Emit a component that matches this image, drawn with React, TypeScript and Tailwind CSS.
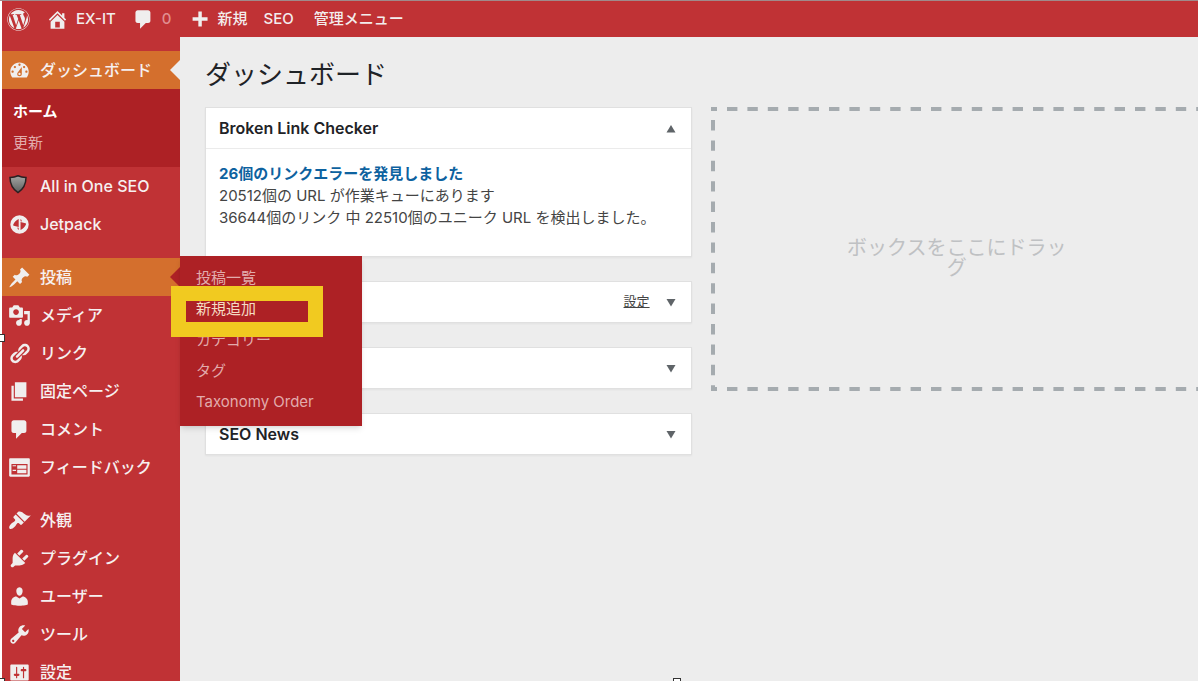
import type { ReactNode } from "react";
import { FaWordpress } from "react-icons/fa";

const ICONS = {
  home: "M16 8.5l1.53 1.53-1.06 1.06L10 4.6l-6.47 6.49-1.06-1.06L10 2.5l4 4v-2h2v4zm-6-2.46l6 5.99V18H4v-5.97zM12 17v-5H8v5h4z",
  plus: "M17 8v3h-5v5H9v-5H4V8h5V3h3v5h5z",
  dashboard:
    "M3.76 16h12.48c1.1-1.37 1.76-3.11 1.76-5 0-4.42-3.58-8-8-8s-8 3.58-8 8c0 1.89.66 3.63 1.76 5zM10 4c.55 0 1 .45 1 1s-.45 1-1 1-1-.45-1-1 .45-1 1-1zM6 6c.55 0 1 .45 1 1s-.45 1-1 1-1-.45-1-1 .45-1 1-1zm8 0c.55 0 1 .45 1 1s-.45 1-1 1-1-.45-1-1 .45-1 1-1zm-5.37 5.55L12 7v6c0 1.1-.9 2-2 2s-2-.9-2-2c0-.57.24-1.08.63-1.45zM4 10c.55 0 1 .45 1 1s-.45 1-1 1-1-.45-1-1 .45-1 1-1zm12 0c.55 0 1 .45 1 1s-.45 1-1 1-1-.45-1-1 .45-1 1-1zm-5 3c0-.55-.45-1-1-1s-1 .45-1 1 .45 1 1 1 1-.45 1-1z",
  jetpack:
    "M10 2a8 8 0 1 0 0 16 8 8 0 0 0 0-16zM9.300 5.200v6.900l-4.300-1.100c-.6-.2-.6-.6-.4-1.100C5.500 7.800 7.200 6 9.300 5.200zM8.200 12.600l1.100.3v1.900c-.7-.5-1.100-1.300-1.100-2.200zM10.900 14.800V7.900l4.300 1.100c.6.2.6.6.4 1.100-.9 2.100-2.600 3.900-4.700 4.700zM10.900 5.200c.7.500 1.100 1.300 1.100 2.200l-1.100-.3z",
  post: "M10.44 3.02l1.82-1.82 6.36 6.35-1.83 1.82c-1.05-.68-2.48-.57-3.41.36l-.75.75c-.92.93-1.04 2.35-.35 3.41l-1.83 1.82-2.41-2.41-2.8 2.79c-.42.42-3.38 2.71-3.8 2.29s1.86-3.39 2.28-3.81l2.79-2.79L4.1 9.36l1.83-1.82c1.05.69 2.48.57 3.4-.36l.75-.75c.93-.92 1.05-2.35.36-3.41z",
  media:
    "M13 11V4c0-.55-.45-1-1-1h-1.67L9 1H5L3.67 3H2c-.55 0-1 .45-1 1v7c0 .55.45 1 1 1h10c.55 0 1-.45 1-1zM7 4.5c1.38 0 2.5 1.12 2.5 2.5S8.38 9.5 7 9.5 4.5 8.38 4.5 7 5.62 4.5 7 4.5zM14 6h5v10.5c0 1.38-1.12 2.5-2.5 2.5S14 17.88 14 16.5s1.12-2.5 2.5-2.5c.17 0 .34.02.5.05V9h-3V6zm-4 8.05V13h2v3.5c0 1.38-1.12 2.5-2.5 2.5S7 17.88 7 16.5 8.12 14 9.5 14c.17 0 .34.02.5.05z",
  links:
    "M17.74 2.76c1.68 1.69 1.68 4.41 0 6.1l-1.53 1.52c-1.12 1.12-2.7 1.47-4.14 1.09l2.62-2.61.76-.77.76-.76c.84-.84.84-2.2 0-3.04-.84-.85-2.2-.85-3.04 0l-.77.76-3.38 3.38c-.37-1.44-.02-3.02 1.1-4.14l1.52-1.53c1.69-1.68 4.42-1.68 6.1 0zM8.59 13.43l5.34-5.34c.42-.42.42-1.1 0-1.52-.44-.43-1.13-.39-1.53 0l-5.33 5.34c-.42.42-.42 1.1 0 1.52.44.43 1.13.39 1.52 0zm-.76 2.29l4.14-4.15c.38 1.44.03 3.02-1.09 4.14l-1.52 1.53c-1.69 1.68-4.41 1.68-6.1 0-1.68-1.68-1.68-4.42 0-6.1l1.53-1.52c1.12-1.12 2.7-1.47 4.14-1.1l-4.14 4.15c-.85.84-.85 2.2 0 3.05.84.84 2.2.84 3.04 0z",
  page: "M6 15V2h10v13H6zm-1 1h8v2H3V5h2v11z",
  comments:
    "M5 2h9c1.1 0 2 .9 2 2v7c0 1.1-.9 2-2 2h-2l-5 5v-5H5c-1.1 0-2-.9-2-2V4c0-1.1.9-2 2-2z",
  feedback:
    "M2 2h16c.55 0 1 .45 1 1v14c0 .55-.45 1-1 1H2c-.55 0-1-.45-1-1V3c0-.55.45-1 1-1zm15 14V7H3v9h14zM4 8v1h3V8H4zm4 0v3h8V8H8zm-4 4v1h3v-1H4zm4 0v3h8v-3H8z",
  appearance:
    "M14.48 11.06L7.41 3.99l1.5-1.5c.5-.56 2.3-.47 3.51.32 1.21.8 1.43 1.28 2.91 2.1 1.18.64 2.45 1.26 4.45.85zm-.71.71L6.7 4.7 4.93 6.47c-.39.39-.39 1.02 0 1.41l1.06 1.06c.39.39.39 1.03 0 1.42-.6.6-1.43 1.11-2.21 1.69-.35.26-.7.53-1.01.84C1.43 14.23.4 16.08 1.4 17.07c.99 1 2.84-.03 4.18-1.36.31-.31.58-.66.85-1.02.57-.78 1.08-1.61 1.69-2.21.39-.39 1.02-.39 1.41 0l1.06 1.06c.39.39 1.02.39 1.41 0z",
  plugins:
    "M13.11 4.36L9.87 7.6 8 5.73l3.24-3.24c.35-.34 1.05-.2 1.56.32.52.51.66 1.21.31 1.55zm-8 1.77l.91-1.12 9.01 9.01-1.19.84c-.71.71-2.63 1.16-3.82 1.16H6.14L4.9 17.26c-.59.59-1.54.59-2.12 0-.59-.58-.59-1.53 0-2.12l1.24-1.24v-3.88c0-1.13.4-3.19 1.09-3.89zm7.26 3.97l3.24-3.24c.34-.35 1.04-.21 1.55.31.52.51.66 1.21.31 1.55l-3.24 3.25z",
  users:
    "M10 9.25c-2.27 0-2.73-3.44-2.73-3.44C7 4.02 7.82 2 9.97 2c2.16 0 2.98 2.02 2.71 3.81 0 0-.41 3.44-2.68 3.44zm0 2.57L12.72 10c2.39 0 4.52 2.33 4.52 4.53v2.49s-3.65 1.13-7.24 1.13c-3.65 0-7.24-1.13-7.24-1.13v-2.49c0-2.25 1.94-4.48 4.47-4.48z",
  tools:
    "M16.68 9.77c-1.34 1.34-3.3 1.67-4.95.99l-5.41 6.52c-.99.99-2.59.99-3.58 0s-.99-2.59 0-3.57l6.52-5.42c-.68-1.65-.35-3.61.99-4.95 1.28-1.28 3.12-1.62 4.72-1.06l-2.89 2.89 2.82 2.82 2.86-2.87c.53 1.58.18 3.39-1.08 4.65zM3.81 16.21c.4.39 1.04.39 1.43 0 .4-.4.4-1.04 0-1.43-.39-.4-1.03-.4-1.43 0-.39.39-.39 1.03 0 1.43z",
  settings:
    "M18 16V4c0-.55-.45-1-1-1H3c-.55 0-1 .45-1 1v12c0 .55.45 1 1 1h14c.55 0 1-.45 1-1zM8 11h1c.55 0 1 .45 1 1s-.45 1-1 1H8v1.5c0 .28-.22.5-.5.5s-.5-.22-.5-.5V13H6c-.55 0-1-.45-1-1s.45-1 1-1h1V5.5c0-.28.22-.5.5-.5s.5.22.5.5V11zm5-2h-1c-.55 0-1-.45-1-1s.45-1 1-1h1V5.5c0-.28.22-.5.5-.5s.5.22.5.5V7h1c.55 0 1 .45 1 1s-.45 1-1 1h-1v5.5c0 .28-.22.5-.5.5s-.5-.22-.5-.5V9z",
};

type IconName = keyof typeof ICONS;

function Icon({ name }: { name: IconName }) {
  return (
    <svg viewBox="0 0 20 20" className="size-[23px] shrink-0 fill-[#f0eeee]" aria-hidden="true">
      <path fillRule="evenodd" d={ICONS[name]} />
    </svg>
  );
}

function ShieldIcon() {
  return (
    <svg viewBox="0 0 20 20" className="mb-1 size-5 shrink-0" aria-hidden="true">
      <defs>
        <linearGradient id="shield" x1="0" y1="0" x2="0" y2="1">
          <stop offset="0" stopColor="#a5a5a3" />
          <stop offset="1" stopColor="#5c5f5e" />
        </linearGradient>
      </defs>
      <path
        d="M10 1.800C7.500 3 5 3.500 2 3.600c0 6.400 2.300 11.400 8 15 5.700-3.600 8-8.600 8-15-3-.1-5.500-.6-8-1.800z"
        fill="url(#shield)"
        stroke="#2a2022"
        strokeWidth="1.500"
      />
    </svg>
  );
}

function AdminBar() {
  return (
    <header className="flex h-9 items-center bg-[#c03235] pl-[5px] text-[15px] font-medium text-[#f3eded]">
      <a href="#" aria-label="WordPress">
        <FaWordpress className="size-[23px] fill-[#f0eeee]" />
      </a>
      <a href="#" className="ml-4 flex items-center gap-[7px]">
        <Icon name="home" />
        EX-IT
      </a>
      <a href="#" className="ml-4 flex items-center gap-[7px]">
        <Icon name="comments" />
        <span className="text-[#e08e90]">0</span>
      </a>
      <a href="#" className="ml-4 flex items-center gap-[7px]">
        <Icon name="plus" />
        新規
      </a>
      <a href="#" className="ml-4">SEO</a>
      <a href="#" className="ml-5">管理メニュー</a>
    </header>
  );
}

function MenuItem({
  icon,
  label,
  active,
  children,
}: {
  icon: IconName | "shield";
  label: string;
  active?: boolean;
  children?: ReactNode;
}) {
  return (
    <li className="relative">
      <a
        href="#"
        className={`flex h-[38px] items-center text-base font-medium text-[#f6f0f0] ${
          active ? "bg-[#d46f2d]" : ""
        }`}
      >
        <span className="flex w-[38px] shrink-0 pl-[6px]">
          {icon === "shield" ? <ShieldIcon /> : <Icon name={icon} />}
        </span>
        {label}
      </a>
      {children}
    </li>
  );
}

function PostsFlyout() {
  return (
    <>
      <span className="absolute top-[9px] right-0 border-y-[10px] border-r-[10px] border-y-transparent border-r-[#ad2125]" />
      <ul className="absolute top-[-2px] left-full z-10 w-[182px] bg-[#ad2125] pt-[6px] pb-[9px] pl-4 text-[15px] leading-[31px] text-[#e2abac] shadow-md">
        <li><a href="#">投稿一覧</a></li>
        <li className="relative">
          <a href="#" className="text-[#f5dcc4]">新規追加</a>
          <span className="absolute top-[-7px] left-[-25px] h-[51px] w-[152px] border-[15px] border-[#f1ca20]" />
        </li>
        <li><a href="#">カテゴリー</a></li>
        <li><a href="#">タグ</a></li>
        <li><a href="#">Taxonomy Order</a></li>
      </ul>
    </>
  );
}

function Sidebar() {
  return (
    <nav className="w-[178px] shrink-0 bg-[#c03235] pt-[14px]">
      <ul>
        <MenuItem icon="dashboard" label="ダッシュボード" active>
          <span className="absolute top-[9px] right-0 border-y-[10px] border-r-[10px] border-y-transparent border-r-[#ededed]" />
        </MenuItem>
        <li className="bg-[#ad2125] px-[11px] pt-[7px] pb-[9px] text-[15px] leading-[31px]">
          <a href="#" className="block font-bold text-white">ホーム</a>
          <a href="#" className="block text-[#e2abac]">更新</a>
        </li>
        <MenuItem icon="shield" label="All in One SEO" />
        <MenuItem icon="jetpack" label="Jetpack" />
      </ul>
      <ul className="mt-[15px]">
        <MenuItem icon="post" label="投稿" active>
          <PostsFlyout />
        </MenuItem>
        <MenuItem icon="media" label="メディア" />
        <MenuItem icon="links" label="リンク" />
        <MenuItem icon="page" label="固定ページ" />
        <MenuItem icon="comments" label="コメント" />
        <MenuItem icon="feedback" label="フィードバック" />
      </ul>
      <ul className="mt-[15px]">
        <MenuItem icon="appearance" label="外観" />
        <MenuItem icon="plugins" label="プラグイン" />
        <MenuItem icon="users" label="ユーザー" />
        <MenuItem icon="tools" label="ツール" />
        <MenuItem icon="settings" label="設定" />
      </ul>
    </nav>
  );
}

function Widget({
  title,
  action,
  children,
}: {
  title: string;
  action?: ReactNode;
  children?: ReactNode;
}) {
  return (
    <section className="border border-[#e0e0e0] bg-white shadow-xs">
      <div className="flex h-10 items-center pr-[14px] pl-[13px]">
        <h2 className="flex-1 text-base font-semibold text-[#1f2327]">{title}</h2>
        {action}
        <button type="button" aria-label={`${title} toggle`} aria-expanded={!!children}>
          <svg viewBox="0 0 12 12" className="size-3 fill-[#5f6468]">
            <path d={children ? "M6 3l4.500 7.500h-9z" : "M6 10.500L1.500 3h9z"} />
          </svg>
        </button>
      </div>
      {children}
    </section>
  );
}

function DropZone() {
  return (
    <div className="relative flex h-[284px] justify-center pt-[131px] pr-1">
      <svg className="absolute inset-0 size-full fill-none stroke-[#a5abaf] stroke-[4]" aria-hidden="true">
        <line x1="0" y1="2" x2="100%" y2="2" strokeDasharray="10.400 10" strokeDashoffset="4.400" />
        <line x1="2" y1="13" x2="2" y2="284" strokeDasharray="10.400 10" />
        <line x1="0" y1="282" x2="100%" y2="282" strokeDasharray="10.400 10" strokeDashoffset="4.400" />
      </svg>
      <p className="w-[230px] text-center text-xl leading-5 text-[#bfc1c3]">
        ボックスをここにドラッグ
      </p>
    </div>
  );
}

export default function App() {
  return (
    <div className="relative h-screen overflow-hidden border-t border-b border-t-[#a08a8b] border-b-white bg-white pl-[2px] font-['Inter','Noto_Sans_CJK_JP',sans-serif]">
      <AdminBar />
      <div className="flex min-h-full bg-[#ededed]">
        <Sidebar />
        <main className="min-w-0 flex-1 pt-[18px] pl-[25px]">
          <h1 className="text-[26px] leading-10 text-[#1f2327]">ダッシュボード</h1>
          <div className="mt-3 grid grid-cols-[49%_50%] items-start gap-[19px]">
            <div className="flex flex-col gap-6">
              <Widget title="Broken Link Checker">
                <div className="border-t border-[#ebebeb] px-[13px] pt-[14px] pb-[27px] text-[15px] leading-[22px] text-[#444]">
                  <a href="#" className="block font-bold text-[#0d629f]">
                    26個のリンクエラーを発見しました
                  </a>
                  <p>20512個の URL が作業キューにあります</p>
                  <p>36644個のリンク 中 22510個のユニーク URL を検出しました。</p>
                </div>
              </Widget>
              <Widget
                title=""
                action={
                  <a href="#" className="mr-[15px] text-[13px] text-[#444] underline">設定</a>
                }
              />
              <Widget title="" />
              <Widget title="SEO News" />
            </div>
            <DropZone />
          </div>
        </main>
      </div>
      {/* resize handles */}
      <span className="absolute top-[333px] left-[-3px] size-2 border border-[#333] bg-white" />
      <span className="absolute bottom-[-5px] left-[-3px] size-2 border border-[#333] bg-white" />
      <span className="absolute bottom-[-5px] left-[673px] size-2 border border-[#333] bg-white" />
    </div>
  );
}
